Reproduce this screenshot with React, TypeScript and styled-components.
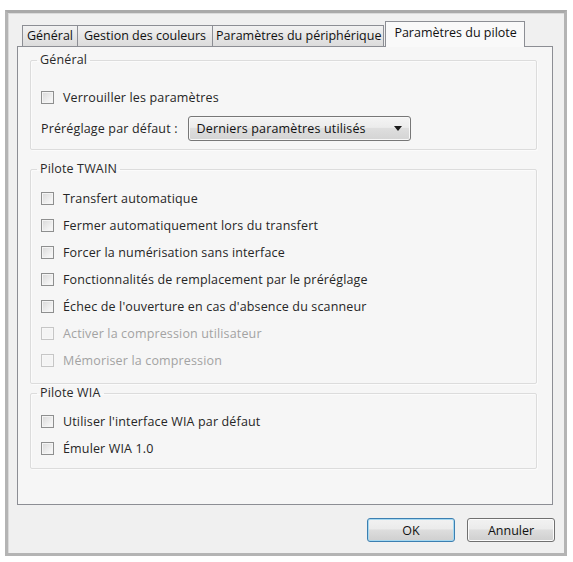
import React from "react";
import styled, { createGlobalStyle } from "styled-components";

const GlobalStyle = createGlobalStyle`
  html, body {
    margin: 0;
    padding: 0;
    background: #ffffff;
  }
  body {
    font-family: "Open Sans", "Noto Sans", sans-serif;
    font-size: 12.5px;
    letter-spacing: 0.15px;
    color: #262626;
  }
`;

const tabs = [
  "Général",
  "Gestion des couleurs",
  "Paramètres du périphérique",
  "Paramètres du pilote",
];

type CheckItem = { label: string; disabled?: boolean };

const twainItems: CheckItem[] = [
  { label: "Transfert automatique" },
  { label: "Fermer automatiquement lors du transfert" },
  { label: "Forcer la numérisation sans interface" },
  { label: "Fonctionnalités de remplacement par le préréglage" },
  { label: "Échec de l'ouverture en cas d'absence du scanneur" },
  { label: "Activer la compression utilisateur", disabled: true },
  { label: "Mémoriser la compression", disabled: true },
];

const wiaItems: CheckItem[] = [
  { label: "Utiliser l'interface WIA par défaut" },
  { label: "Émuler WIA 1.0" },
];

const CheckRow = ({ label, disabled }: CheckItem) => (
  <Row>
    <Box $disabled={disabled} />
    <Label $disabled={disabled}>{label}</Label>
  </Row>
);

const App = () => {
  return (
    <>
      <GlobalStyle />
      <Window>
        <TabStrip>
          {tabs.map((t, i) => (
            <Tab key={t} $active={i === tabs.length - 1}>
              {t}
            </Tab>
          ))}
        </TabStrip>
        <Panel>
          <Group $pt={17} $pb={6}>
            <Legend>Général</Legend>
            <CheckRow label="Verrouiller les paramètres" />
            <SelectRow>
              <Label>Préréglage par défaut :</Label>
              <Select>
                <span>Derniers paramètres utilisés</span>
                <svg width="8" height="5" viewBox="0 0 8 5">
                  <path d="M0 0 H8 L4 5 Z" fill="#1a1a1a" />
                </svg>
              </Select>
            </SelectRow>
          </Group>
          <Group $pt={9} $pb={9} $mt={12}>
            <Legend>Pilote TWAIN</Legend>
            {twainItems.map((it) => (
              <CheckRow key={it.label} {...it} />
            ))}
          </Group>
          <Group $pt={8} $pb={6} $mt={2}>
            <Legend>Pilote WIA</Legend>
            {wiaItems.map((it) => (
              <CheckRow key={it.label} {...it} />
            ))}
          </Group>
        </Panel>
        <ButtonRow>
          <Button $default>OK</Button>
          <Button>Annuler</Button>
        </ButtonRow>
      </Window>
    </>
  );
};

export default App;

const Window = styled.div`
  box-sizing: border-box;
  margin: 10px 0 0 5px;
  width: 562px;
  height: 546px;
  border: 3px solid #b4b4b4;
  border-top-color: #a9a9a9;
  box-shadow: inset 1px 1px 0 #dadada;
  background: #f0f0f0;
  padding: 9px 9px 0 9px;
  display: flex;
  flex-direction: column;
`;

const TabStrip = styled.div`
  display: flex;
  align-items: flex-end;
  height: 25px;
  margin-left: 5px;
  margin-bottom: -1px;
  position: relative;
  z-index: 1;
`;

const Tab = styled.div<{ $active?: boolean }>`
  box-sizing: border-box;
  height: ${(p) => (p.$active ? 26 : 22)}px;
  padding: ${(p) => (p.$active ? "3px 7px 0 8px" : "2px 4px 0 4px")};
  margin-left: ${(p) => (p.$active ? 1 : 0)}px;
  border: 1px solid #8c8e94;
  border-bottom: ${(p) => (p.$active ? "none" : "1px solid #8c8e94")};
  border-left-width: ${(p) => (p.$active ? 1 : 0)}px;
  background: ${(p) =>
    p.$active
      ? "#f9f9f9"
      : "linear-gradient(#f2f2f2, #e6e6e6 50%, #dcdcdc)"};
  color: #111;
  white-space: nowrap;
  line-height: 16px;
  letter-spacing: 0;

  &:first-child {
    border-left-width: 1px;
  }
  &:nth-child(2) {
    padding: 2px 6px 0 6px;
  }
  &:nth-child(3) {
    padding: 2px 2px 0 3px;
  }
`;

const Panel = styled.div`
  box-sizing: border-box;
  width: 536px;
  height: 459px;
  border: 1px solid #8c8e94;
  background: #f6f6f6;
  padding: 6px 15px 0 12px;
  display: flex;
  flex-direction: column;
`;

const Group = styled.fieldset<{ $pt: number; $pb: number; $mt?: number }>`
  margin: ${(p) => p.$mt ?? 0}px 0 0 0;
  padding: ${(p) => p.$pt}px 8px ${(p) => p.$pb}px 10px;
  border: 1px solid #dcdcdc;
  border-radius: 2px;
  box-shadow: inset 1px 1px 0 #fbfbfb, 1px 1px 0 #fbfbfb;
  display: flex;
  flex-direction: column;
  min-width: 0;
`;

const Legend = styled.legend`
  margin-left: -4px;
  padding: 0 3px;
  color: #2a2a2a;
  line-height: 14px;
`;

const Row = styled.div`
  display: flex;
  align-items: center;
  height: 27px;
`;

const Box = styled.span<{ $disabled?: boolean }>`
  box-sizing: border-box;
  width: 13px;
  height: 13px;
  margin-right: 9px;
  border: 1px solid ${(p) => (p.$disabled ? "#c6c6c6" : "#8e8f8f")};
  background: ${(p) =>
    p.$disabled
      ? "#f4f4f4"
      : "linear-gradient(135deg, #d8d8d8, #f2f2f2 70%, #fafafa)"};
  box-shadow: inset 0 0 0 1px ${(p) => (p.$disabled ? "#f7f7f7" : "#f4f4f4")};
  flex: none;
`;

const Label = styled.span<{ $disabled?: boolean }>`
  color: ${(p) => (p.$disabled ? "#a3a3a3" : "#262626")};
  white-space: nowrap;
`;

const SelectRow = styled.div`
  display: flex;
  align-items: center;
  height: 30px;
  margin-top: 2px;
  gap: 10px;
`;

const Select = styled.div`
  box-sizing: border-box;
  width: 223px;
  height: 25px;
  border: 1px solid #777;
  border-radius: 3px;
  background: linear-gradient(#f4f4f4, #ececec 45%, #dedede 50%, #d4d4d4);
  box-shadow: inset 0 0 0 1px #f8f8f8;
  display: flex;
  align-items: center;
  justify-content: space-between;
  padding: 0 8px 0 8px;
  color: #111;
`;

const ButtonRow = styled.div`
  display: flex;
  justify-content: flex-end;
  gap: 12px;
  margin-top: 13px;
`;

const Button = styled.button<{ $default?: boolean }>`
  box-sizing: border-box;
  width: 88px;
  height: 24px;
  border: 1px solid ${(p) => (p.$default ? "#3c7fb1" : "#707070")};
  border-radius: 3px;
  background: linear-gradient(#f2f2f2, #ebebeb 45%, #dddddd 50%, #cfcfcf);
  box-shadow: inset 0 0 0 1px ${(p) => (p.$default ? "#a6d8f0" : "#fbfbfb")};
  font-family: "Open Sans", "Noto Sans", sans-serif;
  font-size: 12.5px;
  color: #111;
  padding: 0;
`;
